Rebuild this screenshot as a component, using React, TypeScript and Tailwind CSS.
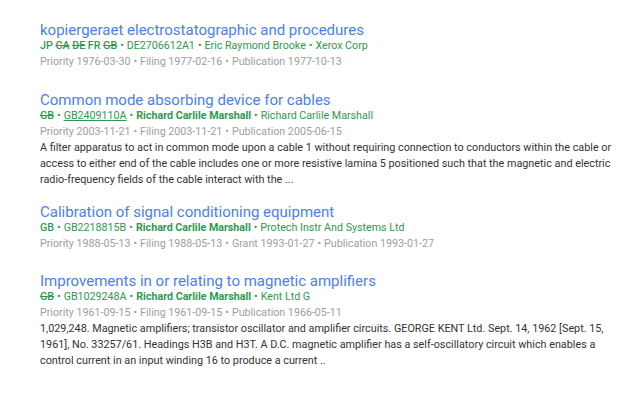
import React from "react";

const Dot = () => <span className="mx-[3px]">•</span>;

const meta = "text-[10.7px] leading-[16px] text-[#2e9a4f] whitespace-nowrap";
const date = "text-[10.7px] leading-[16px] text-[#9e9e9e] whitespace-nowrap";
const title = "text-[15px] leading-[16px] text-[#4a7ff0] whitespace-nowrap";
const abs = "text-[10.8px] leading-[16px] text-[#333333] w-[575px]";

export default function App() {
  return (
    <div className="w-[642px] h-[419px] bg-white pl-[40px] pt-[22px]" style={{ fontFamily: "Roboto, sans-serif" }}>
      <div className="flex flex-col">
        <div>
          <div className={title}>kopiergeraet electrostatographic and procedures</div>
          <div className={meta}>
            <span className="font-medium">JP <s>CA</s> <s>DE</s> FR <s>GB</s></span><Dot />DE2706612A1<Dot />Eric Raymond Brooke<Dot />Xerox Corp
          </div>
          <div className={date}>Priority 1976-03-30<Dot />Filing 1977-02-16<Dot />Publication 1977-10-13</div>
        </div>
        <div className="mt-[22px]">
          <div className={title}>Common mode absorbing device for cables</div>
          <div className={meta}>
            <span className="font-medium"><s>GB</s></span><Dot /><span className="underline">GB2409110A</span><Dot /><span className="font-bold">Richard Carlile Marshall</span><Dot />Richard Carlile Marshall
          </div>
          <div className={date}>Priority 2003-11-21<Dot />Filing 2003-11-21<Dot />Publication 2005-06-15</div>
          <div className={abs}>A filter apparatus to act in common mode upon a cable 1 without requiring connection to conductors within the cable or access to either end of the cable includes one or more resistive lamina 5 positioned such that the magnetic and electric radio-frequency fields of the cable interact with the ...</div>
        </div>
        <div className="mt-[16px]">
          <div className={title}>Calibration of signal conditioning equipment</div>
          <div className={meta}>
            <span className="font-medium">GB</span><Dot />GB2218815B<Dot /><span className="font-bold">Richard Carlile Marshall</span><Dot />Protech Instr And Systems Ltd
          </div>
          <div className={date}>Priority 1988-05-13<Dot />Filing 1988-05-13<Dot />Grant 1993-01-27<Dot />Publication 1993-01-27</div>
        </div>
        <div className="mt-[21px]">
          <div className={title}>Improvements in or relating to magnetic amplifiers</div>
          <div className={meta}>
            <span className="font-medium"><s>GB</s></span><Dot />GB1029248A<Dot /><span className="font-bold">Richard Carlile Marshall</span><Dot />Kent Ltd G
          </div>
          <div className={date}>Priority 1961-09-15<Dot />Filing 1961-09-15<Dot />Publication 1966-05-11</div>
          <div className={abs}>1,029,248. Magnetic amplifiers; transistor oscillator and amplifier circuits. GEORGE KENT Ltd. Sept. 14, 1962 [Sept. 15, 1961], No. 33257/61. Headings H3B and H3T. A D.C. magnetic amplifier has a self-oscillatory circuit which enables a control current in an input winding 16 to produce a current ..</div>
        </div>
      </div>
    </div>
  );
}
